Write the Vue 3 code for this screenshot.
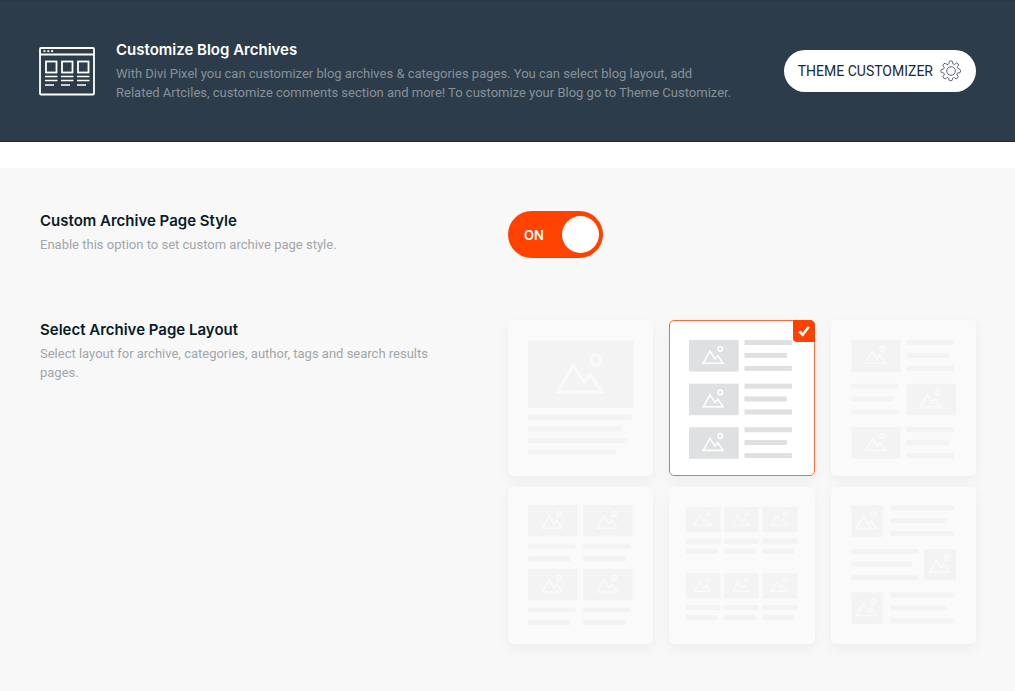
<script setup>
import { ref } from 'vue'

const customStyle = ref(true)
const selected = ref('list')

const image = (x, y, w, h, scale) => ({ x, y, w, h, scale })
const bars = (x, ys, widths) => ys.map((y, i) => ({ x, y, w: widths[i] }))
const rows = [20, 63.5, 107]
const lines = (y) => [y, y + 12.8, y + 25.8]
const short = [47.3, 42.3, 47.3]
const smallRows = [18.3, 61.8, 105.3]

const layouts = [
  {
    id: 'full',
    label: 'Full width',
    images: [image(20, 20.7, 105, 67, 1)],
    bars: bars(20, [94.5, 106.2, 117.9, 129.4], [103.5, 93, 99, 88]),
  },
  {
    id: 'list',
    label: 'List',
    images: rows.map((y) => image(20, y, 49.5, 31.5, 0.45)),
    bars: rows.flatMap((y) => bars(75.3, lines(y), short)),
  },
  {
    id: 'zigzag',
    label: 'Alternating list',
    images: rows.map((y, i) => image(i === 1 ? 75.3 : 20.3, y, 49.3, 31.5, 0.45)),
    bars: rows.flatMap((y, i) => bars(i === 1 ? 20.3 : 75.3, lines(y), short)),
  },
  {
    id: 'two',
    label: 'Two columns',
    images: [18, 81.7].flatMap((y) => [20, 75].map((x) => image(x, y, 49.3, 31.5, 0.45))),
    bars: [56.5, 120].flatMap((y) => [20, 75].flatMap((x) => bars(x, [y, y + 12.8], [47.3, 42.3]))),
  },
  {
    id: 'three',
    label: 'Three columns',
    images: [20, 86].flatMap((y) => [17, 55.3, 93.7].map((x) => image(x, y, 34.2, 25, 0.36))),
    bars: [51.7, 117.7].flatMap((y) => [17, 55.3, 93.7].flatMap((x) => bars(x, [y, y + 10], [34.2, 31]))),
  },
  {
    id: 'square',
    label: 'Alternating squares',
    images: smallRows.map((y, i) => image(i === 1 ? 93 : 20.3, y, 31.7, 31.5, 0.45)),
    bars: smallRows.flatMap((y, i) =>
      i === 1 ? bars(20.3, lines(y), [67, 60, 67]) : bars(59.5, lines(y), [63, 56.3, 63])
    ),
  },
]
</script>

<template>
  <main class="page">
    <header class="banner">
      <svg class="banner-icon" viewBox="0 0 56 49" fill="none" stroke="#fff" stroke-width="1.8" aria-hidden="true">
        <rect x="1" y="1" width="54" height="46.5" rx="1" />
        <path d="M1 7.5H55" />
        <path d="M4.5 4.2h2M8.3 4.2h2M12.1 4.2h2" />
        <g v-for="x in [6, 22, 38]" :key="x">
          <rect :x="x + 1" y="14.5" width="10.5" height="11" />
          <path :d="`M${x} 29.5h12.5M${x} 33.5h12.5M${x} 38h9`" stroke-width="1.6" />
        </g>
      </svg>
      <div class="banner-text">
        <h1 class="title">Customize Blog Archives</h1>
        <p class="desc">
          With Divi Pixel you can customizer blog archives &amp; categories pages. You can select blog layout, add
          Related Artciles, customize comments section and more! To customize your Blog go to Theme Customizer.
        </p>
      </div>
      <button class="customizer" type="button">
        <span>THEME CUSTOMIZER</span>
        <svg class="gear" viewBox="0 0 24 24" fill="none" stroke="#4a5763" stroke-width="1" stroke-linejoin="round" aria-hidden="true">
          <circle cx="12" cy="12" r="4.7" />
          <path d="M10.3 1.5Q12 .3 13.7 1.5l.2 2q.2 1.200 1.300 1.300.8.1 1.500-.6l1.300-1q2.100.300 2.300 2.300l-1.100 1.500q-.9 1.100.2 2.200l2.200.8q1.700 1.700.3 3.700l-2 .3q-1.800.3-1.400 2.100l1.400 1.900q-.2 2.100-2.300 2.600l-1.700-1.200q-1.400-.9-2.200.5l-.4 2.200q-1.700 1.200-3.400 0l-.4-2.200q-.6-1.300-2.100-.5l-1.800 1.200q-2.100-.4-2.300-2.500l1.300-1.900q.7-1.700-1.100-2.100l-2-.4q-1.200-1.700 0-3.400l2.200-.5q1.500-.5.7-2l-1.200-1.900q.4-2 2.400-2.400l1.900 1.300q1.500.7 2.100-.8z" />
        </svg>
      </button>
    </header>

    <section class="settings">
      <div class="setting">
        <div class="setting-text">
          <h2 id="style-title" class="title">Custom Archive Page Style</h2>
          <p class="desc">Enable this option to set custom archive page style.</p>
        </div>
        <label class="toggle" :class="{ off: !customStyle }">
          <input v-model="customStyle" class="hidden-input" type="checkbox" role="switch" aria-labelledby="style-title" />
          <span class="toggle-text">{{ customStyle ? 'ON' : 'OFF' }}</span>
          <span class="knob"></span>
        </label>
      </div>

      <div class="setting">
        <div class="setting-text">
          <h2 id="layout-title" class="title">Select Archive Page Layout</h2>
          <p class="desc">Select layout for archive, categories, author, tags and search results pages.</p>
        </div>
        <div class="layouts" role="radiogroup" aria-labelledby="layout-title">
          <label v-for="item in layouts" :key="item.id" class="card" :class="{ active: selected === item.id }">
            <input v-model="selected" class="hidden-input" type="radio" name="layout" :value="item.id" :aria-label="item.label" />
            <svg class="thumb" viewBox="0 0 145 156" aria-hidden="true">
              <g v-for="(img, i) in item.images" :key="`i${i}`">
                <rect class="block" :x="img.x" :y="img.y" :width="img.w" :height="img.h" />
                <g class="glyph" :transform="`translate(${img.x + img.w / 2 - 0.8} ${img.y + img.h / 2 - 1}) scale(${img.scale})`">
                  <path d="M-22 18.5L-6.7-8 4.3 9l6-7.5L22.3 18.5z" />
                  <ellipse cx="15.8" cy="-13.2" rx="4.8" ry="5.4" />
                </g>
              </g>
              <rect v-for="(bar, i) in item.bars" :key="`b${i}`" class="block" :x="bar.x" :y="bar.y" :width="bar.w" height="5" />
            </svg>
            <span v-if="selected === item.id" class="badge">
              <svg class="check" viewBox="0 0 12 12" fill="none" stroke="#fff" stroke-width="2.6" aria-hidden="true">
                <path d="M1.4 6.4L4.6 9.7 10.8 1.8" />
              </svg>
            </span>
          </label>
        </div>
      </div>
    </section>
  </main>
</template>

<style scoped>
.page {
  min-height: 100vh;
  display: flex;
  flex-direction: column;
  background: #fff;
  color: #071c28;
  font-family: Inter, "Liberation Sans", sans-serif;
}
.banner {
  display: flex;
  align-items: center;
  padding: 39px;
  background: #2d3c4a;
  border-top: 1px solid #263846;
  border-bottom: 1px solid #1b2e3d;
}
.banner-icon {
  flex: none;
  width: 56px;
  height: 49px;
}
.banner-text {
  flex: 1;
  margin: 0 32px 0 21px;
}
.title {
  margin: 0 0 5px;
  font-size: 15px;
  line-height: 19px;
  font-weight: 600;
}
.banner .title {
  color: #fff;
}
.desc {
  max-width: 620px;
  margin: 0;
  font-family: Roboto, "Liberation Sans", sans-serif;
  font-size: 13px;
  line-height: 19px;
  color: #a1a6ab;
}
.banner .desc {
  color: #87919a;
}
.customizer {
  flex: none;
  display: flex;
  align-items: center;
  gap: 7px;
  height: 42px;
  padding: 0 14px;
  border: 0;
  border-radius: 21px;
  background: #fff;
  color: #172b3a;
  font-family: Roboto, "Liberation Sans", sans-serif;
  font-size: 14px;
}
.gear {
  width: 22px;
  height: 22px;
}
.settings {
  flex: 1;
  display: flex;
  flex-direction: column;
  gap: 62px;
  margin-top: 26px;
  padding: 43px 39px 48px 40px;
  background: #f8f8f8;
}
.setting {
  display: grid;
  grid-template-columns: 1fr 1fr;
  align-items: start;
}
.setting-text {
  padding-right: 56px;
}
.hidden-input {
  position: absolute;
  opacity: 0;
  margin: 0;
}
.toggle {
  display: flex;
  align-items: center;
  justify-content: space-between;
  box-sizing: border-box;
  width: 95px;
  height: 47px;
  padding: 0 4px 0 16px;
  border-radius: 24px;
  background: #ff4200;
  color: #fff;
  font-size: 13px;
  font-weight: 600;
  cursor: pointer;
}
.toggle.off {
  flex-direction: row-reverse;
  padding: 0 16px 0 4px;
  background: #a1a6ab;
}
.knob {
  width: 37px;
  height: 37px;
  border-radius: 50%;
  background: #fff;
}
.layouts {
  display: grid;
  grid-template-columns: repeat(3, 1fr);
  gap: 11px 16px;
}
.card {
  position: relative;
  border-radius: 5px;
  background: #fafafa;
  box-shadow: 0 5px 14px rgba(0, 0, 0, 0.05);
  cursor: pointer;
}
.card.active {
  background: #fff;
  outline: 1px solid #ff6a3c;
  outline-offset: -1px;
}
.thumb {
  display: block;
  width: 100%;
}
.block {
  fill: #f3f3f3;
}
.glyph {
  fill: none;
  stroke: #fafafa;
  stroke-width: 3.4;
}
.active .block {
  fill: #dfe0e2;
}
.active .glyph {
  stroke: #fff;
}
.badge {
  position: absolute;
  top: 0;
  right: 0;
  display: grid;
  place-items: center;
  width: 22px;
  height: 22px;
  border-radius: 0 5px 0 4px;
  background: #ff4200;
}
.check {
  width: 12px;
  height: 12px;
}
</style>

<style>
body {
  margin: 0;
}
</style>
